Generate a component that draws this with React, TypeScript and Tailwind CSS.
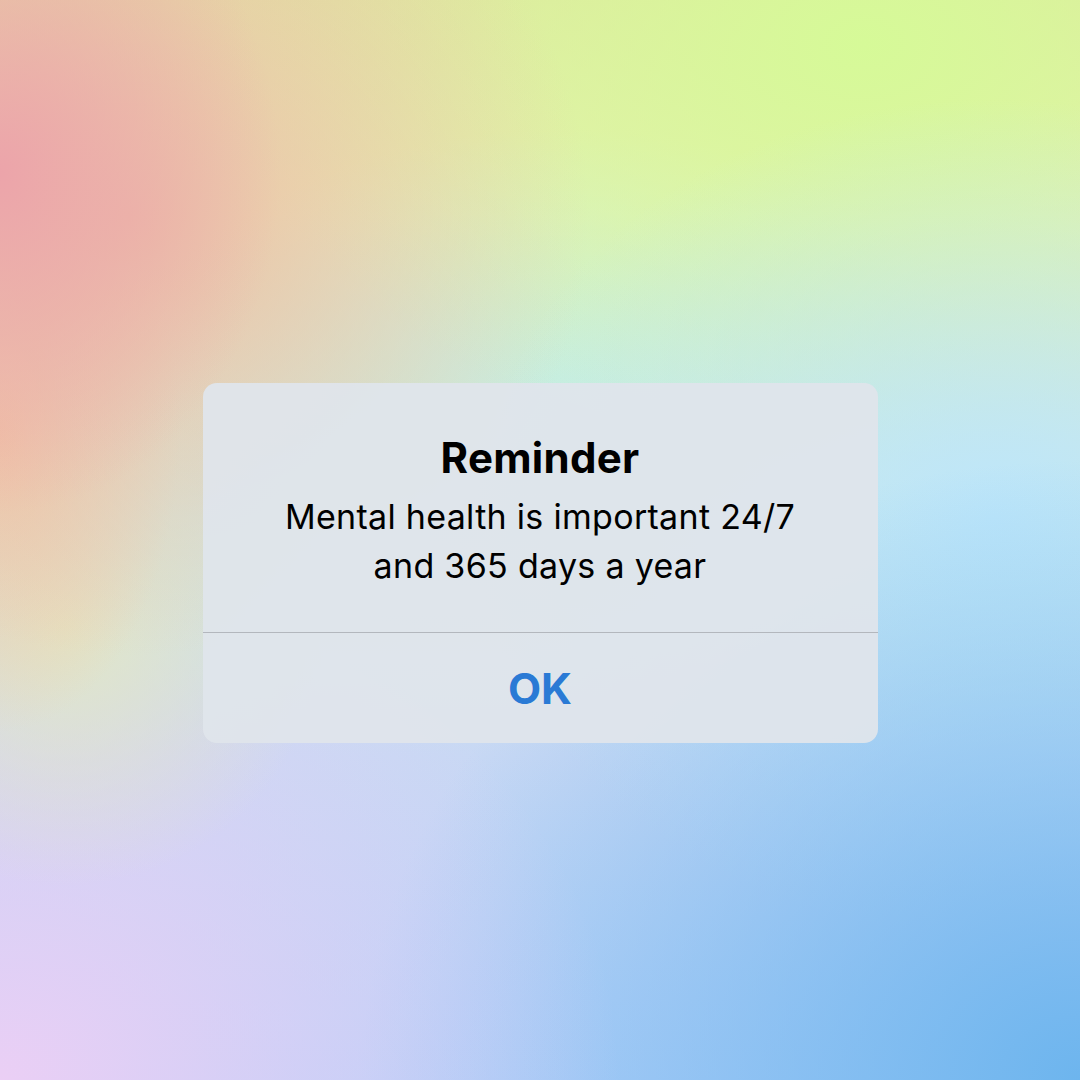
import React from "react";

const App: React.FC = () => {
  return (
    <div className="w-[1080px] h-[1080px] flex flex-col items-center pt-[383px] font-['Inter','Liberation_Sans',sans-serif] bg-[radial-gradient(280px_340px_at_0%_16%,#eca4aa,transparent),radial-gradient(460px_440px_at_12%_20%,#ecbea8,transparent),radial-gradient(180px_300px_at_0%_40%,#f2c6a6,transparent),radial-gradient(260px_260px_at_6%_58%,#e2e6c6,transparent),radial-gradient(620px_520px_at_0%_100%,#ebcff5,transparent),radial-gradient(720px_620px_at_100%_100%,#6db5ee,transparent),radial-gradient(520px_420px_at_92%_48%,#bde6fa,transparent),radial-gradient(640px_420px_at_80%_4%,#d6fa98,transparent),radial-gradient(420px_260px_at_52%_36%,#c6eee2,transparent),linear-gradient(180deg,#e2e4a4_0%,#e8f0b6_20%,#dceccc_34%,#cde8e6_48%,#c8d8f4_70%,#b4d0f8_100%)]">
      <div className="w-[675px] rounded-[14px] bg-[#dfe5eb]/95 overflow-hidden">
        <div className="flex flex-col items-center pt-[51px] pb-[42px] text-black">
          <h1 className="text-[42px] leading-[48px] font-bold tracking-[0.3px]">Reminder</h1>
          <p className="mt-[10px] text-[34px] leading-[49px] tracking-[0.3px] text-center">
            Mental health is important 24/7
            <br />
            and 365 days a year
          </p>
        </div>
        <div className="h-px bg-[#b3b7bd]" />
        <button className="w-full h-[110px] flex items-center justify-center text-[43px] font-bold text-[#2a7ad5]">
          OK
        </button>
      </div>
    </div>
  );
};

export default App;
